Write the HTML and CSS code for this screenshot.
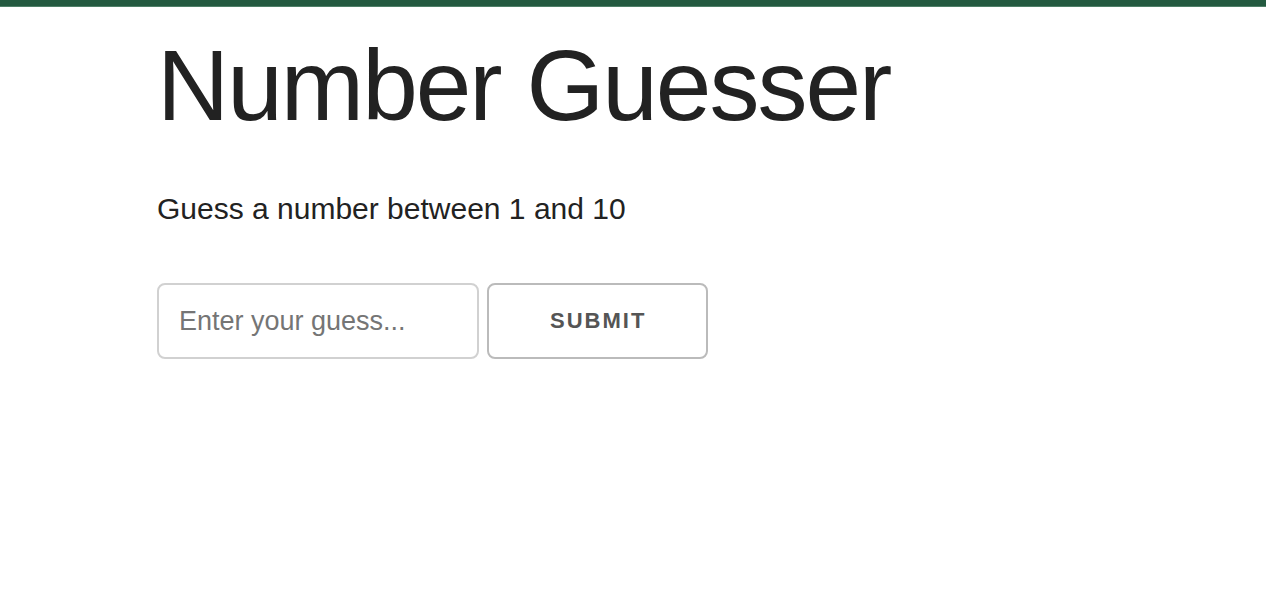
FILE: index.html
```html
<!DOCTYPE html>
<html lang="en">
<head>
<meta charset="utf-8">
<title>Number Guesser</title>
<link rel="stylesheet" href="styles.css">
</head>
<body>
<div class="topbar"></div>
<main class="container">
  <h1 class="title">Number Guesser</h1>
  <p class="lead">Guess a number between 1 and 10</p>
  <form class="guess-form" onsubmit="return false;">
    <input class="guess-input" type="number" placeholder="Enter your guess...">
    <button class="submit-btn" type="submit">Submit</button>
  </form>
</main>
</body>
</html>
```
FILE: styles.css
```css
html, body {
  margin: 0;
  padding: 0;
  background: #fff;
}
body {
  font-family: "Liberation Sans", Arial, Helvetica, sans-serif;
  color: #222;
  font-size: 30px;
  line-height: 1.6;
}
.topbar {
  height: 6px;
  background: #245a40;
  border-bottom: 1px solid #4f8068;
}
.container {
  padding: 18px 0 0 157px;
}
.title {
  margin: 0 0 40px 0;
  font-size: 100px;
  font-weight: normal;
  line-height: 1.2;
  letter-spacing: -2px;
  color: #222;
}
.lead {
  margin: 0 0 50px 0;
  font-size: 30px;
  line-height: 48px;
}
.guess-form {
  display: flex;
  gap: 8px;
  align-items: flex-start;
}
.guess-input {
  box-sizing: border-box;
  width: 322px;
  height: 76px;
  padding: 12px 20px;
  border: 2px solid #d1d1d1;
  border-radius: 8px;
  font-family: "Liberation Sans", Arial, sans-serif;
  font-size: 27px;
  color: #222;
  background: #fff;
  outline: none;
  -moz-appearance: textfield;
  appearance: textfield;
}
.guess-input::-webkit-outer-spin-button,
.guess-input::-webkit-inner-spin-button {
  -webkit-appearance: none;
  margin: 0;
}
.guess-input::placeholder {
  color: #757575;
}
.submit-btn {
  box-sizing: border-box;
  height: 76px;
  padding: 0 60px 0 61px;
  border: 2px solid #bbb;
  border-radius: 8px;
  background: transparent;
  color: #555;
  font-family: "Liberation Sans", Arial, sans-serif;
  font-size: 22px;
  font-weight: bold;
  letter-spacing: 2px;
  text-transform: uppercase;
  cursor: pointer;
}
```
